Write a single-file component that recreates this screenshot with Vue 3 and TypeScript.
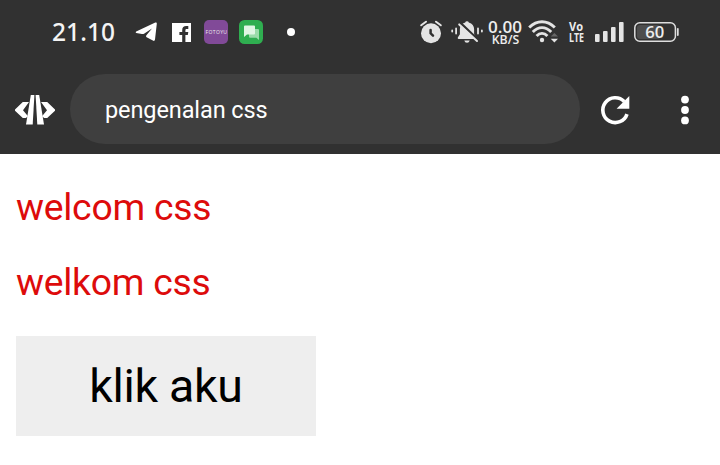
<script setup lang="ts">
import { ref } from 'vue'

interface Line {
  id: number
  text: string
}

const time = ref('21.10')
const pageTitle = ref('pengenalan css')
const battery = ref(60)
const lines: Line[] = [
  { id: 1, text: 'welcom css' },
  { id: 2, text: 'welkom css' },
]
const bars: { x: number; h: number }[] = [
  { x: 0, h: 8 },
  { x: 8, h: 11 },
  { x: 16, h: 15 },
  { x: 24, h: 20 },
]
</script>

<template>
  <div class="screen">
    <header class="header">
      <div class="status">
        <div class="left">
          <span class="time">{{ time }}</span>
          <svg class="telegram" width="22" height="20" viewBox="0 0 22 20">
            <path d="M1.2 9.6 L20.3 .6 Q22 0 21.8 1.8 L20 17.6 Q19.6 19.6 17.9 18.6 L11.6 15.2 Q10.4 14.3 11.4 13.2 L17 6.4 L9 11.7 Q8.1 12.3 7 12 L1.2 11 Q0 10.4 1.2 9.6Z" fill="#fff" />
          </svg>
          <svg class="facebook" width="19" height="19" viewBox="0 0 19 19">
            <path d="M0 0H19V19H0Z" fill="#fff" />
            <path d="M10.2 19V12H7.4V9H10.2V7.2C10.2 4.5 11.7 3.1 14.2 3.1H16.3V6H14.8C13.8 6 13.4 6.4 13.4 7.3V9H16.3L15.8 12H13.4V19Z" fill="#313131" />
          </svg>
          <svg class="fotoyu" width="24" height="24" viewBox="0 0 24 24">
            <rect width="24" height="24" rx="5" fill="#814a98" />
            <text x="1.5" y="14.4" textLength="21.5" font-size="5" font-weight="500" fill="#eadcf0">FOTOYU</text>
          </svg>
          <svg class="chat" width="24" height="24" viewBox="0 0 24 24">
            <rect width="24" height="24" rx="5.5" fill="#2fae50" />
            <path d="M10 9H19Q20 9 20 10V20L17.3 17.8H11Q10 17.8 10 16.8Z" fill="#9bdcaa" />
            <path d="M6 5.5H15Q16 5.5 16 6.5V13.5Q16 14.5 15 14.5H8L5 17V6.5Q5 5.5 6 5.5Z" fill="#e0f6e4" />
          </svg>
          <span class="more-dot"></span>
        </div>

        <div class="right">
          <svg class="alarm" width="22" height="24" viewBox="0 0 22 24">
            <circle cx="11" cy="13.2" r="10" fill="#e4e4e4" />
            <path d="M1.2 5.3L6 1.7M20.8 5.3L16 1.7" stroke="#e4e4e4" stroke-width="2" stroke-linecap="round" fill="none" />
            <path d="M10.6 10V13.3L13 15.7" stroke="#313131" stroke-width="2.5" stroke-linecap="round" fill="none" />
          </svg>
          <svg class="bell" width="32" height="24" viewBox="0 0 32 24">
            <path d="M16 1.2Q17.5 1.2 17.8 2.4C21.3 3.2 23.1 6 23.1 9V14.2L25.2 17.5Q25.6 19 24.2 19H7.8Q6.4 19 6.8 17.5L8.9 14.2V9C8.9 6 10.7 3.2 14.2 2.4Q14.5 1.2 16 1.2Z" fill="#e4e4e4" />
            <path d="M13.3 20.5H18.7Q18.2 22.8 16 22.8T13.3 20.5Z" fill="#e4e4e4" />
            <path d="M9.6 3.2L27.6 20.4" stroke="#313131" stroke-width="2.6" />
            <path d="M8.2 4.4L26 21" stroke="#e4e4e4" stroke-width="2" stroke-linecap="round" />
            <path d="M5.1 8.5V13.5M27 8.5V13.5M1.2 10.5V11.5M30.9 10.5V11.5" stroke="#e4e4e4" stroke-width="1.8" stroke-linecap="round" />
          </svg>
          <svg class="speed" width="34" height="25" viewBox="0 0 34 25">
            <text x="0" y="12.5" textLength="34" lengthAdjust="spacingAndGlyphs" font-size="16.4" font-weight="600">0.00</text>
            <text x="3.7" y="24" textLength="27.5" lengthAdjust="spacingAndGlyphs" font-size="12.7" font-weight="600">KB/S</text>
          </svg>
          <svg class="wifi" width="30" height="24" viewBox="0 0 30 24">
            <g fill="none" stroke="#e4e4e4" stroke-width="2.9">
              <path d="M1.2 7.6Q7 1.7 14 1.7T26.8 7.6" />
              <path d="M4.8 12Q9 7.6 14 7.6T23.2 12" />
              <path d="M8.6 16Q11 13.4 14 13.4T19.4 16" />
            </g>
            <circle cx="14" cy="20" r="2.2" fill="#e4e4e4" />
            <path d="M22.7 16.5L26.4 13L30 16.5Z" fill="#666" />
            <path d="M22.7 18.8H30L26.4 22.5Z" fill="#e4e4e4" />
          </svg>
          <svg class="volte" width="15" height="22" viewBox="0 0 15 22">
            <text x="0" y="10" textLength="14" lengthAdjust="spacingAndGlyphs" font-size="13" font-weight="700">Vo</text>
            <text x="0" y="20.8" textLength="15" lengthAdjust="spacingAndGlyphs" font-size="13" font-weight="700">LTE</text>
          </svg>
          <svg class="signal" width="29" height="20" viewBox="0 0 29 20">
            <rect v-for="b in bars" :key="b.x" :x="b.x" :y="20 - b.h" width="4.6" :height="b.h" rx="1" fill="#e4e4e4" />
          </svg>
          <svg class="battery" width="46" height="20" viewBox="0 0 46 20">
            <rect x="3" y="3" width="23" height="14" rx="3" fill="#4d4d4d" />
            <rect x=".8" y=".8" width="40.6" height="18.4" rx="5" fill="none" stroke="#dedede" stroke-width="1.5" />
            <path d="M43.8 7V13" stroke="#dedede" stroke-width="1.8" stroke-linecap="round" />
            <text x="11.3" y="15.8" textLength="19" lengthAdjust="spacingAndGlyphs" font-size="16" font-weight="600">{{ battery }}</text>
          </svg>
        </div>
      </div>

      <div class="toolbar">
        <svg class="code" width="40" height="30" viewBox="0 0 40 30">
          <g fill="#fff">
            <path d="M7.8 7H14L8 15.2L13 21.2L10.8 23H7.8L0 15.8V14.4Z" />
            <path d="M32.2 7H26L32 15.2L27 21.2L29.2 23H32.2L40 15.8V14.4Z" />
            <path d="M15.8 0H19.4L17.7 29.5H11Z" />
            <path d="M20.6 0H24.2L29 29.5H22.3Z" />
          </g>
        </svg>
        <div class="address">{{ pageTitle }}</div>
        <svg class="reload" width="29" height="29" viewBox="0 0 29 29">
          <path d="M23.2 5.6A12.4 12.4 0 1 0 26 18.1" fill="none" stroke="#fff" stroke-width="3.6" />
          <path d="M28.3 0V12.8H15.6Z" fill="#fff" />
        </svg>
        <svg class="menu" width="8" height="30" viewBox="0 0 8 30">
          <circle cx="4" cy="4.6" r="3.9" fill="#fff" />
          <circle cx="4" cy="15" r="3.9" fill="#fff" />
          <circle cx="4" cy="25.4" r="3.9" fill="#fff" />
        </svg>
      </div>
    </header>

    <main class="page">
      <p v-for="line in lines" :key="line.id" class="line">{{ line.text }}</p>
      <button class="action" type="button">klik aku</button>
    </main>
  </div>
</template>

<style>
body {
  background: #fff;
}
</style>

<style scoped>
.screen {
  width: 720px;
  height: 465px;
  overflow: hidden;
  background: #fff;
  font-family: Roboto, 'Liberation Sans', sans-serif;
}
svg {
  display: block;
  flex: none;
  overflow: visible;
}
svg text {
  font-family: 'Open Sans', 'Noto Sans', sans-serif;
  fill: #ededed;
}
.header {
  height: 154px;
  background: #313131;
}
.status {
  display: flex;
  justify-content: space-between;
  height: 64px;
  padding: 0 40px 0 52px;
  box-sizing: border-box;
}
.left,
.right {
  display: flex;
  align-items: center;
}
.time {
  width: 83px;
  color: #f4f4f4;
  font: 500 24.5px/28px 'Noto Sans', 'Open Sans', sans-serif;
  letter-spacing: 0.1px;
}
.telegram {
  margin-right: 15px;
}
.facebook {
  margin-right: 13px;
}
.fotoyu {
  margin-right: 11px;
}
.chat {
  margin-right: 24px;
}
.more-dot {
  width: 8px;
  height: 8px;
  border-radius: 50%;
  background: #fff;
}
.alarm {
  margin-right: 9px;
}
.bell {
  margin-right: 5px;
}
.speed {
  margin-right: 6px;
}
.wifi {
  margin-right: 11px;
}
.volte {
  margin-right: 11px;
}
.signal {
  margin-right: 10px;
}
.toolbar {
  display: flex;
  align-items: center;
  height: 90px;
  padding: 0 31px 0 15px;
}
.code,
.reload,
.menu {
  margin-top: 2px;
}
.address {
  width: 510px;
  height: 70px;
  margin: 0 21px 0 15px;
  padding-left: 35px;
  box-sizing: border-box;
  border-radius: 35px;
  background: #3f3f3f;
  color: #fff;
  font-size: 23.5px;
  line-height: 73px;
  letter-spacing: -0.1px;
}
.reload {
  margin-right: 51px;
}
.page {
  padding: 31px 16px 0;
}
.line {
  margin: 0 0 31px;
  color: #dd0b0b;
  font-size: 37.3px;
  line-height: 44px;
  letter-spacing: -0.25px;
}
.action {
  display: block;
  width: 300px;
  height: 100px;
  margin-top: 32px;
  padding: 0;
  border: 0;
  background: #eee;
  color: #000;
  font: 400 46.5px/98px Roboto, sans-serif;
  letter-spacing: -0.3px;
}
</style>
